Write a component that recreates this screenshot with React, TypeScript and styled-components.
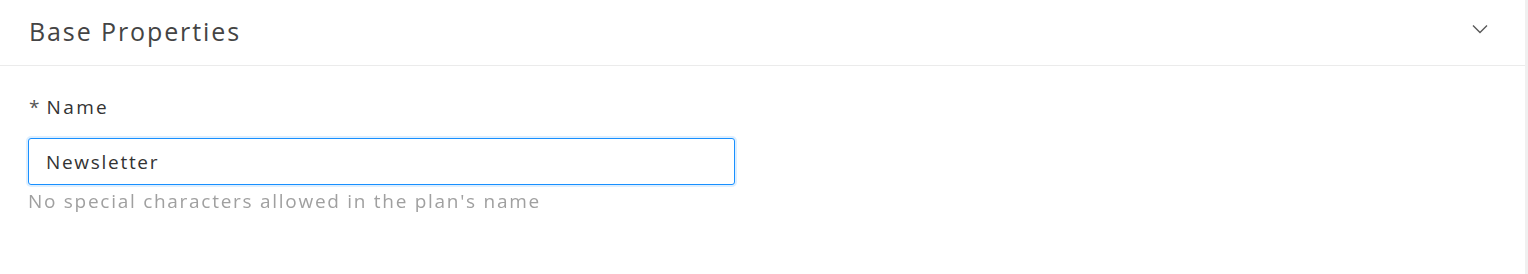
import React, { useEffect, useRef } from "react";
import styled, { createGlobalStyle } from "styled-components";

const FONT = `"Open Sans", "Liberation Sans", sans-serif`;

const Global = createGlobalStyle`
  html, body { margin: 0; padding: 0; background: #ffffff; }
  body { font-family: ${FONT}; }
  * { box-sizing: border-box; }
`;

const Page = styled.div`
  display: flex;
  width: 1528px;
  height: 274px;
  background: #ffffff;
`;

const Panel = styled.section`
  flex: 1;
  display: flex;
  flex-direction: column;
`;

const Scrollbar = styled.div`
  width: 3px;
  background: #f0f0f0;
`;

const Header = styled.header`
  height: 66px;
  display: flex;
  align-items: center;
  justify-content: space-between;
  padding: 0 37px 0 29px;
  border-bottom: 1px solid #ebebeb;
`;

const Title = styled.h2`
  margin: 0;
  font-size: 25px;
  font-weight: 400;
  color: #444444;
  letter-spacing: 1.9px;
  padding-bottom: 3px;
`;

const Chevron = styled.svg`
  width: 16px;
  height: 10px;
  margin-bottom: 8px;
  color: #595959;
`;

const Body = styled.div`
  display: flex;
  flex-direction: column;
  padding: 29px 28px 0 28px;
`;

const Label = styled.label`
  display: flex;
  align-items: center;
  gap: 7px;
  font-size: 19px;
  letter-spacing: 2.4px;
  color: #333333;
  height: 24px;
  padding-left: 1px;
`;

const Asterisk = styled.span`
  color: #555555;
  font-size: 19px;
  letter-spacing: 0;
`;

const Input = styled.input`
  margin-top: 19px;
  width: 707px;
  height: 47px;
  padding: 0 16px 0 17px;
  border: 1px solid #1890ff;
  border-radius: 3px;
  box-shadow: 0 0 0 2px rgba(24, 144, 255, 0.14);
  outline: none;
  font-family: ${FONT};
  font-size: 19px;
  letter-spacing: 1.7px;
  color: #333333;
  caret-color: #222222;
`;

const Help = styled.div`
  margin-top: 3px;
  font-size: 19px;
  letter-spacing: 1.72px;
  color: #a0a0a0;
`;

export default function App() {
  const ref = useRef<HTMLInputElement>(null);
  useEffect(() => {
    const el = ref.current;
    if (el) {
      el.focus();
      el.setSelectionRange(el.value.length, el.value.length);
    }
  }, []);
  return (
    <>
      <Global />
      <Page>
        <Panel>
          <Header>
            <Title>Base Properties</Title>
            <Chevron viewBox="0 0 16 10" fill="none">
              <path d="M1 1.5 L8 8.5 L15 1.5" stroke="currentColor" strokeWidth="1.4" />
            </Chevron>
          </Header>
          <Body>
            <Label>
              <Asterisk>*</Asterisk>
              Name
            </Label>
            <Input ref={ref} defaultValue="Newsletter" />
            <Help>No special characters allowed in the plan's name</Help>
          </Body>
        </Panel>
        <Scrollbar />
      </Page>
    </>
  );
}
